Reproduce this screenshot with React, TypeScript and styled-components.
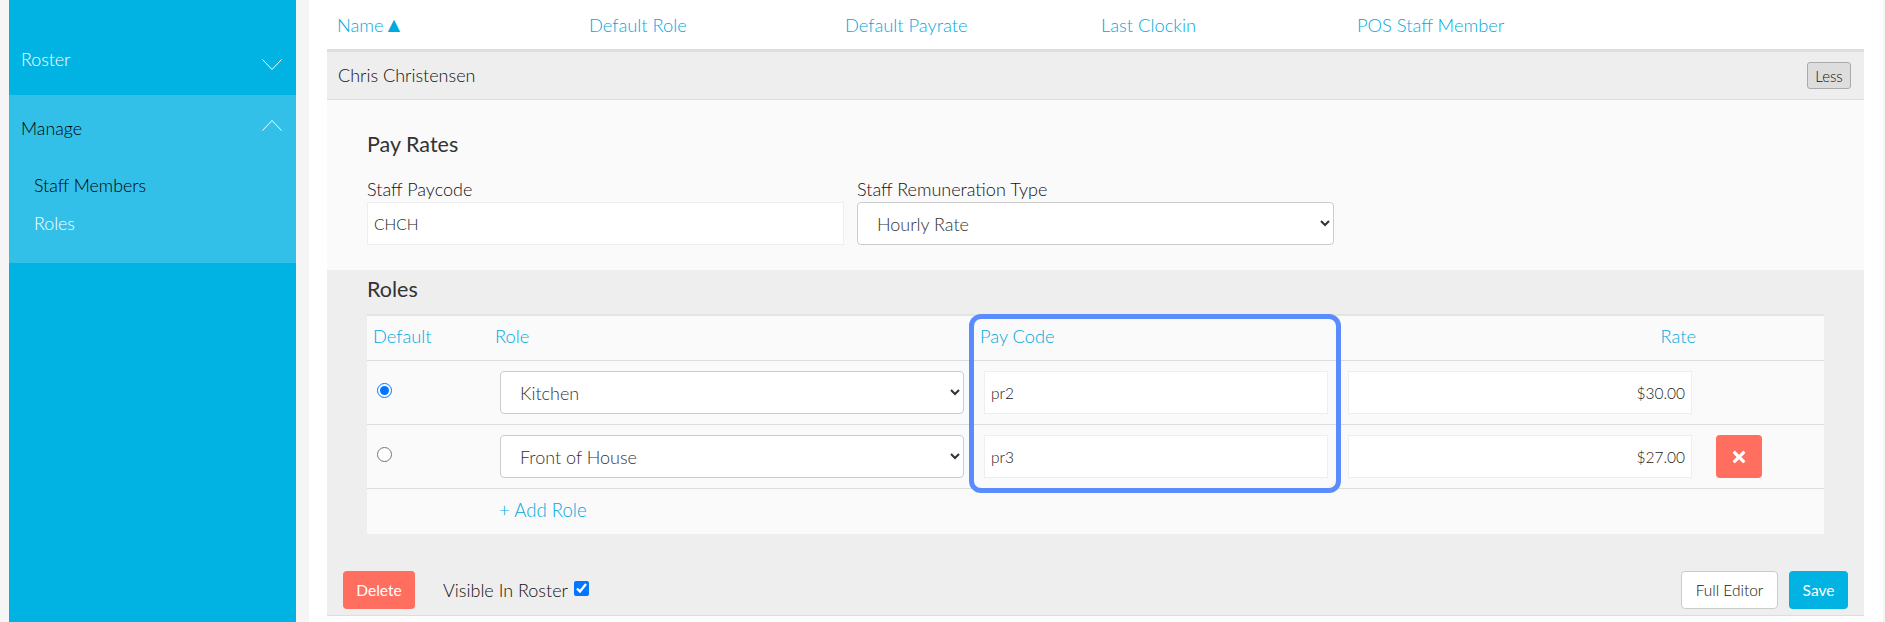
import React from "react";
import styled, { createGlobalStyle } from "styled-components";
import { FaTimes } from "react-icons/fa";

const Global = createGlobalStyle`
  html, body { margin: 0; padding: 0; height: 622px; overflow: hidden; background: #f5f5f5; }
  body { font-family: "Lato", "Open Sans", sans-serif; font-size: 18px; font-weight: 300; color: #111; }
  * { box-sizing: border-box; }
`;

const Page = styled.div`
  display: flex;
  height: 622px;
  padding: 0 2px 0 9px;
  gap: 13px;
`;

const Sidebar = styled.nav`
  width: 287px;
  flex: none;
  background: #00b3e3;
  padding-top: 32px;
`;

const NavGroup = styled.div<{ $open?: boolean }>`
  height: ${(p) => (p.$open ? "168px" : "63px")};
  background: ${(p) => (p.$open ? "#33c0e8" : "transparent")};
`;

const NavHead = styled.div<{ $open?: boolean }>`
  display: flex;
  justify-content: space-between;
  align-items: center;
  height: ${(p) => (p.$open ? "66px" : "54px")};
  padding: 0 14px 0 12px;
  color: ${(p) => (p.$open ? "#000" : "#fff")};
  font-size: 17.8px;
  font-weight: 300;
`;

const SubNav = styled.div`
  padding: 5px 0 0 25px;
`;

const SubItem = styled.div<{ $light?: boolean }>`
  height: 38px;
  line-height: 38px;
  font-size: 17.8px;
  font-weight: 300;
  color: ${(p) => (p.$light ? "#fff" : "#000")};
`;

const Chevron = styled.svg<{ $up?: boolean }>`
  width: 20px;
  height: 11px;
  margin-top: ${(p) => (p.$up ? "-6px" : "10px")};
  fill: none;
  stroke: #fff;
  stroke-width: 1;
`;

const Main = styled.main`
  flex: 1;
  background: #fff;
  padding-left: 18px;
  padding-right: 19px;
`;

const ColumnBar = styled.div`
  display: grid;
  grid-template-columns: 252px repeat(4, 256px);
  height: 52px;
  padding: 7px 0 0 10px;
  border-bottom: 3px solid #dedede;
  line-height: 36px;
`;

const ColumnLink = styled.a`
  color: #00a9de;
  font-size: 18.3px;
`;

const SortMark = styled.span`
  font-size: 21px;
  line-height: 0;
`;

const StaffRow = styled.div`
  display: flex;
  justify-content: space-between;
  align-items: center;
  height: 48px;
  padding: 0 13px 2px 11px;
  background: #eee;
  border-bottom: 1px solid #ddd;
  font-size: 18px;
`;

const LessButton = styled.button`
  width: 44px;
  height: 27px;
  margin-bottom: -2px;
  padding: 0;
  border: 1px solid #aaa;
  border-radius: 3px;
  background: #ddd;
  color: #111;
  font: 300 15px "Lato", sans-serif;
`;

const PayPanel = styled.section`
  height: 170px;
  background: #fafafa;
  padding: 30px 0 0 40px;
`;

const Heading = styled.h3`
  margin: 0;
  font-size: 21.5px;
  font-weight: 400;
  line-height: 28px;
  color: #333;
`;

const FieldRow = styled.div`
  display: flex;
  gap: 13px;
  margin-top: 19px;
`;

const Field = styled.label<{ $w: number }>`
  display: block;
  width: ${(p) => p.$w}px;
  font-size: 18px;
  line-height: 25px;
`;

const TextInput = styled.input<{ $right?: boolean }>`
  display: block;
  width: 100%;
  height: 43px;
  padding: 0 6px;
  border: 1px solid #eee;
  background: #fff;
  color: #222;
  font: 300 15.5px "Lato", sans-serif;
  text-align: ${(p) => (p.$right ? "right" : "left")};
  outline: none;
`;

const Dropdown = styled.select`
  display: block;
  width: 100%;
  height: 43px;
  padding: 0 15px;
  border: 1px solid #ccc;
  border-radius: 4px;
  background: #fff;
  color: #333;
  font: 300 18px "Lato", sans-serif;
`;

const RolesPanel = styled.section`
  height: 346px;
  background: #eee;
  border-bottom: 1px solid #ddd;
  padding: 5px 40px 0;
  display: flex;
  flex-direction: column;
`;

const RolesHeading = styled(Heading)`
  height: 39px;
`;

const RoleTable = styled.div`
  position: relative;
  width: 1457px;
  background: #fafafa;
  border-top: 2px solid #e4e4e4;
`;

const gridCols = "128px 485px 364px 352px 1fr";

const HeadRow = styled.div`
  display: grid;
  grid-template-columns: ${gridCols};
  height: 45px;
  align-items: center;
  padding-bottom: 4px;
  border-bottom: 1px solid #ddd;
  color: #00a9de;
  font-size: 18.3px;
`;

const HeadCell = styled.span<{ $pl?: number; $right?: boolean }>`
  padding-left: ${(p) => p.$pl ?? 0}px;
  text-align: ${(p) => (p.$right ? "right" : "left")};
`;

const RoleRow = styled.div`
  display: grid;
  grid-template-columns: ${gridCols};
  height: 64px;
  padding-top: 10px;
  border-bottom: 1px solid #ddd;
`;

const RadioCell = styled.div`
  padding-left: 10px;
  padding-top: 12px;
`;

const Radio = styled.input`
  display: block;
  width: 15px;
  height: 15px;
  margin: 0;
`;

const SelectCell = styled.div`
  padding: 0 16px 0 5px;
`;

const InputCell = styled.div`
  padding: 0 16px 0 4px;
`;

const InputRight = styled.div`
  padding: 0 4px;
`;

const RemoveButton = styled.button`
  width: 46px;
  height: 43px;
  margin-left: 20px;
  padding: 0;
  border: none;
  border-radius: 4px;
  background: #ff6e5f;
  color: #fff;
  font-size: 18px;
  display: flex;
  align-items: center;
  justify-content: center;
`;

const AddRow = styled.div`
  height: 45px;
  padding-left: 132px;
  line-height: 43px;
  color: #00a9de;
  font-size: 18.6px;
`;

const Highlight = styled.div`
  position: absolute;
  left: 602px;
  top: -2px;
  width: 372px;
  height: 179px;
  border: 5px solid #5b8cff;
  border-radius: 12px;
  pointer-events: none;
`;

const Footer = styled.div`
  display: flex;
  align-items: center;
  height: 38px;
  margin: 37px -24px 0;
`;

const Button = styled.button<{ $kind: "danger" | "plain" | "primary"; $w: number }>`
  width: ${(p) => p.$w}px;
  height: 38px;
  padding: 0;
  border-radius: 4px;
  border: ${(p) => (p.$kind === "plain" ? "1px solid #ccc" : "none")};
  background: ${(p) => ({ danger: "#ff6e5f", plain: "#fff", primary: "#00b3e3" }[p.$kind])};
  color: ${(p) => (p.$kind === "plain" ? "#111" : "#fff")};
  font: ${(p) => (p.$kind === "plain" ? 300 : 400)} 15.5px "Lato", sans-serif;
`;

const VisibleLabel = styled.label`
  display: flex;
  align-items: center;
  gap: 6px;
  margin-left: 28px;
  font-size: 18px;
`;

const Check = styled.input`
  width: 15px;
  height: 15px;
  margin: -4px 0 0;
`;

const Spacer = styled.div`
  flex: 1;
`;

const FooterGap = styled.div`
  width: 11px;
`;

function Down() {
  return (
    <Chevron viewBox="0 0 20 11">
      <path d="M0.5 0.5 L10 10.5 L19.5 0.5" />
    </Chevron>
  );
}

function Up() {
  return (
    <Chevron $up viewBox="0 0 20 11">
      <path d="M0.5 10.5 L10 0.5 L19.5 10.5" />
    </Chevron>
  );
}

const roles = [
  { role: "Kitchen", code: "pr2", rate: "$30.00", main: true },
  { role: "Front of House", code: "pr3", rate: "$27.00", main: false },
];

export default function App() {
  return (
    <>
      <Global />
      <Page>
        <Sidebar>
          <NavGroup>
            <NavHead>
              Roster
              <Down />
            </NavHead>
          </NavGroup>
          <NavGroup $open>
            <NavHead $open>
              Manage
              <Up />
            </NavHead>
            <SubNav>
              <SubItem>Staff Members</SubItem>
              <SubItem $light>Roles</SubItem>
            </SubNav>
          </NavGroup>
        </Sidebar>
        <Main>
          <ColumnBar>
            <ColumnLink>Name<SortMark>▲</SortMark></ColumnLink>
            <ColumnLink>Default Role</ColumnLink>
            <ColumnLink>Default Payrate</ColumnLink>
            <ColumnLink>Last Clockin</ColumnLink>
            <ColumnLink>POS Staff Member</ColumnLink>
          </ColumnBar>
          <StaffRow>
            Chris Christensen
            <LessButton>Less</LessButton>
          </StaffRow>
          <PayPanel>
            <Heading>Pay Rates</Heading>
            <FieldRow>
              <Field $w={477}>
                Staff Paycode
                <TextInput defaultValue="CHCH" />
              </Field>
              <Field $w={477}>
                Staff Remuneration Type
                <Dropdown defaultValue="Hourly Rate">
                  <option>Hourly Rate</option>
                </Dropdown>
              </Field>
            </FieldRow>
          </PayPanel>
          <RolesPanel>
            <RolesHeading>Roles</RolesHeading>
            <RoleTable>
              <HeadRow>
                <HeadCell $pl={6}>Default</HeadCell>
                <HeadCell>Role</HeadCell>
                <HeadCell>Pay Code</HeadCell>
                <HeadCell $right>Rate</HeadCell>
              </HeadRow>
              {roles.map((r) => (
                <RoleRow key={r.code}>
                  <RadioCell>
                    <Radio type="radio" name="default" defaultChecked={r.main} />
                  </RadioCell>
                  <SelectCell>
                    <Dropdown defaultValue={r.role}>
                      <option>Kitchen</option>
                      <option>Front of House</option>
                    </Dropdown>
                  </SelectCell>
                  <InputCell>
                    <TextInput defaultValue={r.code} />
                  </InputCell>
                  <InputRight>
                    <TextInput $right defaultValue={r.rate} />
                  </InputRight>
                  {!r.main && (
                    <RemoveButton>
                      <FaTimes />
                    </RemoveButton>
                  )}
                </RoleRow>
              ))}
              <AddRow>+ Add Role</AddRow>
              <Highlight />
            </RoleTable>
            <Footer>
              <Button $kind="danger" $w={72}>Delete</Button>
              <VisibleLabel>
                Visible In Roster
                <Check type="checkbox" defaultChecked />
              </VisibleLabel>
              <Spacer />
              <Button $kind="plain" $w={97}>Full Editor</Button>
              <FooterGap />
              <Button $kind="primary" $w={59}>Save</Button>
            </Footer>
          </RolesPanel>
        </Main>
      </Page>
    </>
  );
}
